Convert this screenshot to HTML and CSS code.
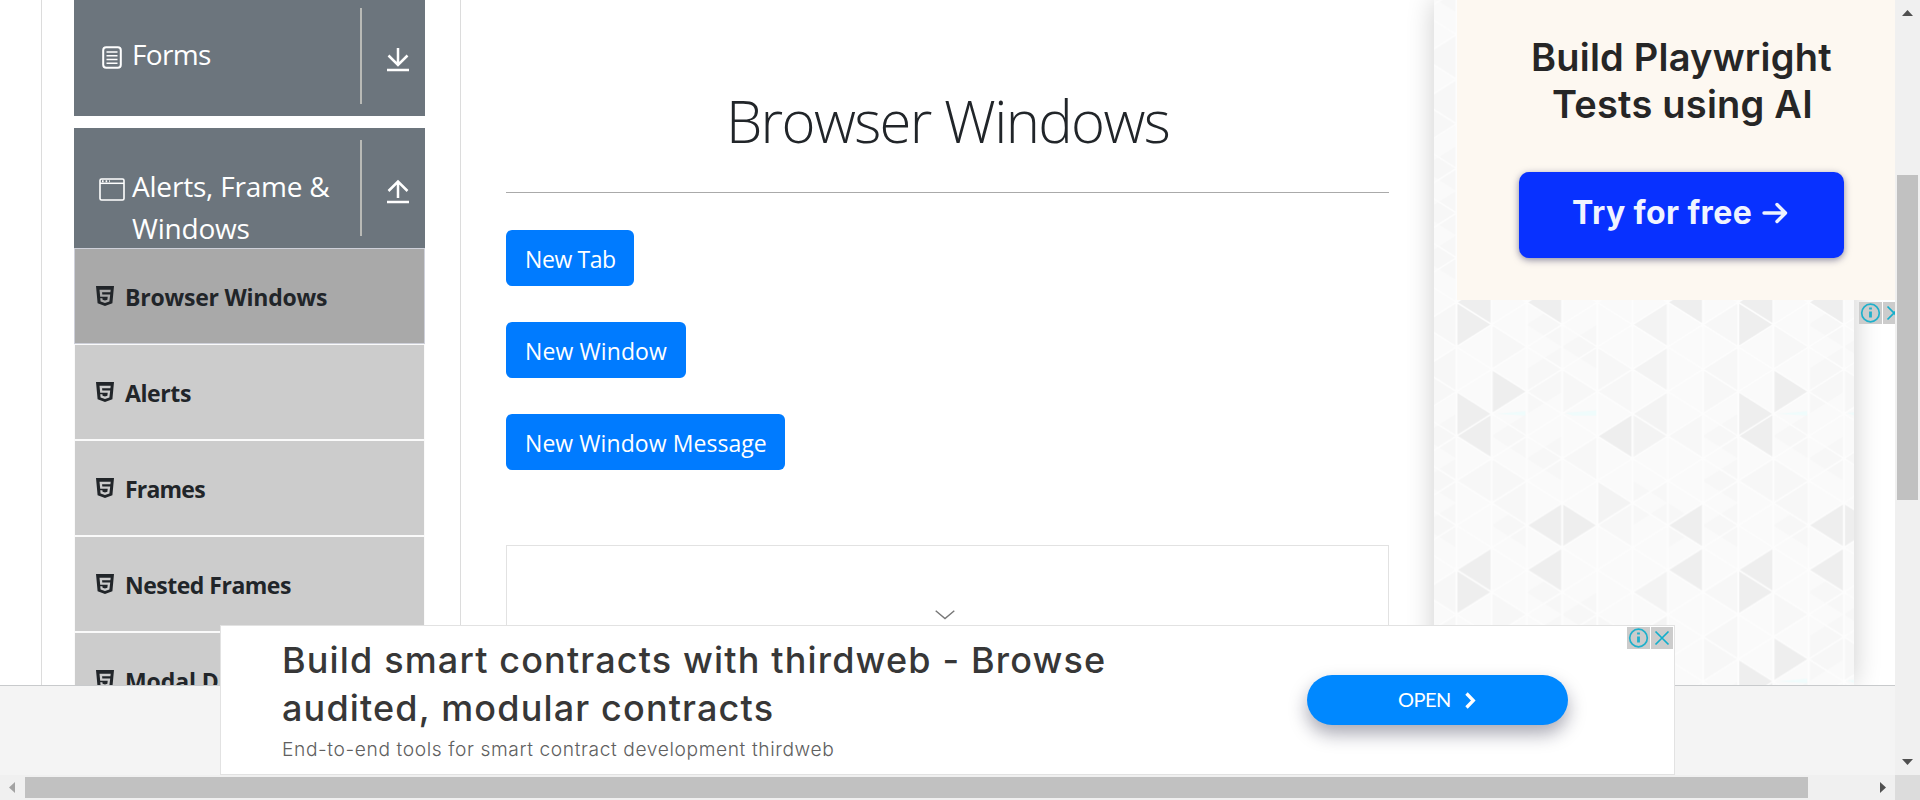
FILE: index.html
```
<!DOCTYPE html>
<html lang="en">
<head>
<meta charset="utf-8">
<title>Browser Windows</title>
<link rel="stylesheet" href="styles.css">
</head>
<body>
<svg class="defs" width="0" height="0" aria-hidden="true">
  <symbol id="html5" viewBox="0 0 18 20"><path fill-rule="evenodd" d="M0 0H18L16.4 17.2L9 20L1.6 17.2ZM3.5 3.8L4.2 10.8H11.7L11.4 13.8L9 14.6L6.6 13.8L6.4 12.2H4.2L4.6 15.6L9 17.1L13.4 15.6L14.2 8.6H6.3L6.1 6.2H14.4L14.7 3.8Z"/></symbol>
  <symbol id="info" viewBox="0 0 23 22"><circle cx="11.5" cy="11" r="8.8" fill="none" stroke="#1fb0cb" stroke-width="1.7"/><path d="M11.5 9.4V15.6M11.5 5.4V7.6" stroke="#1fb0cb" stroke-width="2.8"/></symbol>
  <symbol id="close" viewBox="0 0 22 22"><path d="M4.5 4.5L17.5 17.5M17.5 4.5L4.5 17.5" stroke="#12aecb" stroke-width="1.7"/></symbol>
</svg>
<div class="window">
  <div class="viewport">
    <div class="page">
      <aside class="sidebar">
        <div class="group">
          <svg class="group-icon" viewBox="0 0 26 26" fill="none" stroke="#fff"><rect x="4.2" y="2.2" width="17.6" height="20.6" rx="3" stroke-width="2"/><path d="M7.5 7H18.5M7.5 10.8H18.5M7.5 14.5H18.5M7.5 18.2H18.5" stroke-width="1.4"/></svg>
          <span class="group-name forms">Forms</span>
          <span class="rule"></span>
          <svg class="arrow" viewBox="0 0 24 26" fill="none" stroke="#fff" stroke-width="2.5"><path d="M12 1V18M2.5 8.5L12 18L21.5 8.5M1 23H23"/></svg>
        </div>
        <div class="group">
          <svg class="group-icon" viewBox="0 0 26 26" fill="none" stroke="#fff"><rect x="1" y="2" width="24" height="21" rx="1.5" stroke-width="1.6"/><path d="M1 6.3H25" stroke-width="1.5"/><path d="M3 4.2H11" stroke-width="2" stroke-dasharray="1.6 2"/></svg>
          <span class="group-name alerts">Alerts, Frame &amp;<br>Windows</span>
          <span class="rule"></span>
          <svg class="arrow" viewBox="0 0 24 26" fill="none" stroke="#fff" stroke-width="2.5"><path d="M12 19V2.5M2.5 12L12 2.5L21.5 12M1 23H23"/></svg>
        </div>
        <ul class="menu">
          <li class="item active"><svg><use href="#html5"/></svg><span class="m1">Browser Windows</span></li>
          <li class="item"><svg><use href="#html5"/></svg><span class="m2">Alerts</span></li>
          <li class="item"><svg><use href="#html5"/></svg><span class="m3">Frames</span></li>
          <li class="item"><svg><use href="#html5"/></svg><span class="m4">Nested Frames</span></li>
          <li class="item"><svg><use href="#html5"/></svg><span class="m5">Modal Dialogs</span></li>
        </ul>
      </aside>
      <main class="content">
        <h1>Browser Windows</h1>
        <div class="buttons">
          <button class="btn b1">New Tab</button>
          <button class="btn b2">New Window</button>
          <button class="btn b3">New Window Message</button>
        </div>
        <div class="frame"><svg width="20" height="10" viewBox="0 0 20 10" fill="none" stroke="#777" stroke-width="1.4"><path d="M.7 .7L10 8.6L19.3 .7"/></svg></div>
      </main>
      <aside class="ads">
        <div class="panel">
          <svg class="triangles" width="420" height="685">
            <defs>
              <pattern id="tri" width="8" height="12" patternUnits="userSpaceOnUse" patternTransform="translate(22.5 280) scale(35.22 22.3)">
                <rect width="8" height="12" fill="#fafafa"/>
                <path fill="#f7f7f7" d="M1 2L2 3L1 4ZM4 3L5 4L4 5ZM8 3L7 4L8 5ZM3 3L2 4L3 5ZM5 9L6 10L5 11ZM6 9L5 10L6 11ZM2 4L3 5L2 6ZM3 4L4 5L3 6ZM7 4L8 5L7 6ZM2 9L1 10L2 11ZM3 7L2 8L3 9ZM4 7L3 8L4 9ZM1 7L2 8V6ZM0 9L1 10V8ZM1 8L2 9L1 10ZM7 9L8 10V8ZM6 10L7 11L6 12ZM8 6L7 7L8 8ZM8 10L7 11L8 12ZM3 1L2 2L3 3ZM1 11L2 12V10ZM4 11L5 12V10ZM4 2L3 3L4 4ZM8 1L7 2L8 3ZM4 5L5 6V4ZM7 6L6 7L7 8Z"/>
                <path fill="#f3f3f3" d="M6 1L5 2L6 3ZM6 3L5 4L6 5ZM6 5L5 6L6 7ZM5 6L6 7L5 8ZM4 9L5 10L4 11Z"/>
                <path fill="#eee" d="M0 1L1 2L0 3ZM1 0L0 1L1 2ZM3 0L2 1L3 2ZM7 0L6 1L7 2ZM1 4L2 5L1 6ZM0 5L1 6L0 7ZM1 6L0 7L1 8ZM5 6L4 7L5 8ZM3 10L2 11L3 12ZM3 10L4 11L3 12ZM7 10L6 11L7 12Z"/>
                <path fill="#effcfc" d="M1.15 6L1.96 5.88V6.08ZM3.1 5.95L4 5.84V6.08L3.3 6.08Z"/>
                <path fill="none" stroke="#fdfdfd" stroke-width=".06" d="M0 0V12M1 0V12M2 0V12M3 0V12M4 0V12M5 0V12M6 0V12M7 0V12M8 0V12M0 -7L8 1M0 -5L8 3M0 -3L8 5M0 -1L8 7M0 1L8 9M0 3L8 11M0 5L8 13M0 7L8 15M0 9L8 17M0 11L8 19M0 1L8 -7M0 3L8 -5M0 5L8 -3M0 7L8 -1M0 9L8 1M0 11L8 3M0 13L8 5M0 15L8 7M0 17L8 9M0 19L8 11"/>
              </pattern>
            </defs>
            <rect width="420" height="685" fill="url(#tri)"/>
          </svg>
        </div>
        <div class="side-ad">
          <div class="creative">
            <p class="s1">Build Playwright</p>
            <p class="s2">Tests using AI</p>
            <div class="try"><span>Try for free</span><svg width="26" height="24" viewBox="0 0 26 24" fill="none" stroke="#eef3ff" stroke-width="3.4" stroke-linecap="round" stroke-linejoin="round"><path d="M2 12H23M15 3.5L23.5 12L15 20.5"/></svg></div>
          </div>
          <div class="choices"><svg class="ci"><use href="#info"/></svg><svg class="cx"><use href="#close"/></svg></div>
        </div>
      </aside>
    </div>
    <footer class="footer"></footer>
    <div class="banner">
      <div class="copy">
        <p class="big">Build smart contracts with thirdweb - Browse</p>
        <p class="big">audited, modular contracts</p>
        <p class="small">End-to-end tools for smart contract development thirdweb</p>
      </div>
      <div class="open"><span>OPEN</span><svg width="11" height="17" viewBox="0 0 11 17" fill="none" stroke="#fff" stroke-width="3.3"><path d="M1.5 1.5L8.3 8.5L1.5 15.5"/></svg></div>
      <div class="choices top"><svg class="ci"><use href="#info"/></svg><svg class="cx"><use href="#close"/></svg></div>
    </div>
  </div>
  <div class="vbar">
    <svg width="11" height="6" viewBox="0 0 11 6" fill="#505050"><path d="M0 6L5.5 0L11 6Z"/></svg>
    <div class="vthumb"></div>
    <svg class="down" width="11" height="6" viewBox="0 0 11 6" fill="#505050"><path d="M0 0L5.5 6L11 0Z"/></svg>
  </div>
  <div class="hbar">
    <svg width="6" height="11" viewBox="0 0 6 11" fill="#a3a3a3"><path d="M6 0L0 5.5L6 11Z"/></svg>
    <div class="hthumb"></div>
    <svg class="right" width="6" height="11" viewBox="0 0 6 11" fill="#505050"><path d="M0 0L6 5.5L0 11Z"/></svg>
  </div>
  <div class="corner"></div>
</div>
</body>
</html>
```
FILE: styles.css
```
* { box-sizing: border-box; }
body { margin: 0; overflow: hidden; background: #fff; color: #212529; font-family: "Open Sans", "Noto Sans", sans-serif; }
p, h1, ul { margin: 0; padding: 0; font-weight: 400; }
svg { display: block; flex: none; }
.defs { position: absolute; }
.window { display: grid; grid-template: 775px 25px / 1895px 25px; width: 1920px; height: 800px; }
.viewport { position: relative; overflow: hidden; }
.page { display: flex; height: 685px; overflow: hidden; }
.footer { height: 90px; background: #f4f4f4; border-top: 1px solid #c8cacc; }

.sidebar { flex: none; width: 420px; height: 685px; margin-left: 41px; padding: 0 35px 0 32px; border: solid #dcdcdc; border-width: 0 1px; }
.group { display: flex; height: 120px; padding-left: 25px; background: #6c757d; color: #fff; }
.group:first-child { margin-top: -4px; margin-bottom: 12px; }
.group-icon { width: 26px; height: 26px; margin-top: 48.5px; }
.group-name { width: 228px; margin: 36.5px 0 0 7px; font-size: 28px; line-height: 42.7px; white-space: nowrap; }
.forms { letter-spacing: -.65px; }
.alerts { letter-spacing: -.2px; }
.rule { width: 2px; height: 96px; margin-top: 12px; background: #b9bab6; }
.arrow { width: 24px; height: 26px; margin: 51px 0 0 24px; }
.menu { list-style: none; }
.item { display: flex; align-items: flex-start; height: 96px; padding: 37px 0 0 21px; border: 1px solid #fafafa; background: #ccc; font-size: 23px; font-weight: 700; line-height: 22px; white-space: nowrap; }
.item.active { background: #a9a9a9; border-color: #ced0d9; }
.item svg { width: 18px; height: 20px; margin-right: 11px; fill: #212529; }
.m1 { letter-spacing: -.22px; }
.m2 { letter-spacing: -.4px; }
.m3 { letter-spacing: -.8px; }
.m4 { letter-spacing: -.5px; }
.m5 { letter-spacing: -.1px; }

.content { flex: none; width: 883px; margin-left: 45px; display: flex; flex-direction: column; }
h1 { flex: none; height: 193px; padding-top: 81px; border-bottom: 1px solid #aaa; font-size: 58px; font-weight: 300; line-height: 80px; letter-spacing: -1.65px; text-align: center; white-space: nowrap; }
.buttons { display: flex; flex: none; flex-direction: column; align-items: flex-start; gap: 36px; margin-top: 37px; }
.btn { height: 56px; padding: 0 0 0 19px; border: 0; border-radius: 6px; background: #007bff; color: #fff; font: 400 23px/58px "Open Sans", sans-serif; text-align: left; white-space: nowrap; }
.b1 { width: 128px; letter-spacing: -.4px; }
.b2 { width: 180px; letter-spacing: .1px; }
.b3 { width: 279px; letter-spacing: .07px; }
.frame { display: flex; flex: none; justify-content: center; height: 160px; margin-top: 75px; padding: 64px 5px 0 0; border: 1px solid #e2e2e2; }

.ads { display: grid; flex: none; width: 461px; margin-left: 45px; }
.panel, .side-ad { grid-area: 1 / 1; }
.panel { width: 420px; height: 685px; box-shadow: 0 0 26px rgba(0, 0, 0, .2); }
.side-ad { z-index: 1; width: 438px; margin-left: 23px; overflow: hidden; }
.creative { height: 300px; padding-top: 34px; background: #fdf8f1; font-family: Inter, sans-serif; }
.creative p { height: 47px; font-size: 38px; font-weight: 600; line-height: 47px; letter-spacing: .22px; color: #262626; white-space: nowrap; }
.s1 { padding-left: 74px; }
.s2 { padding-left: 95px; }
.try { display: flex; align-items: center; width: 325px; height: 86px; margin: 44px 0 0 62px; padding: 0 0 5px 53px; border-radius: 10px; background: #0831ff; box-shadow: 0 2px 7px rgba(30, 30, 80, .5); color: #f0f4ff; font-size: 32px; font-weight: 700; letter-spacing: .4px; white-space: nowrap; }
.try span { width: 190px; }
.choices { display: flex; gap: 1px; }
.choices svg { height: 22px; background: #ccc; }
.ci { width: 23px; }
.cx { width: 22px; }
.side-ad .choices { padding: 2px 0 0 402px; }

.banner { position: absolute; left: 220px; top: 625px; display: flex; width: 1455px; height: 150px; padding-left: 61px; background: #fff; border: 1px solid #e2e2e2; font-family: Inter, sans-serif; }
.copy { width: 1025px; padding-top: 10px; white-space: nowrap; }
.big { font-size: 36px; font-weight: 500; line-height: 48px; letter-spacing: 1.15px; color: #373737; }
.small { padding-top: 4px; font-size: 19.2px; font-weight: 300; line-height: 26px; letter-spacing: .6px; color: #606060; }
.open { display: flex; align-items: center; width: 261px; height: 50px; margin-top: 49px; padding-left: 91px; border-radius: 25px; background: #0088ff; box-shadow: 0 9px 18px rgba(20, 20, 50, .36); color: #fff; font: 400 20px Lato, sans-serif; letter-spacing: -.5px; }
.open span { width: 67px; padding-bottom: 2px; }
.choices.top { margin: 1px 0 0 59px; }

.vbar, .hbar { background: #f0f0f0; display: flex; }
.vbar { flex-direction: column; align-items: center; padding-top: 10px; }
.vthumb { width: 21px; height: 325px; margin-top: 159px; background: #c1c1c1; }
.down { margin-top: 259px; }
.hbar { align-items: center; padding-left: 9px; }
.hthumb { width: 1783px; height: 21px; margin-left: 10px; background: #c1c1c1; }
.right { margin-left: 72px; }
.corner { background: #dcdcdc; }
```
